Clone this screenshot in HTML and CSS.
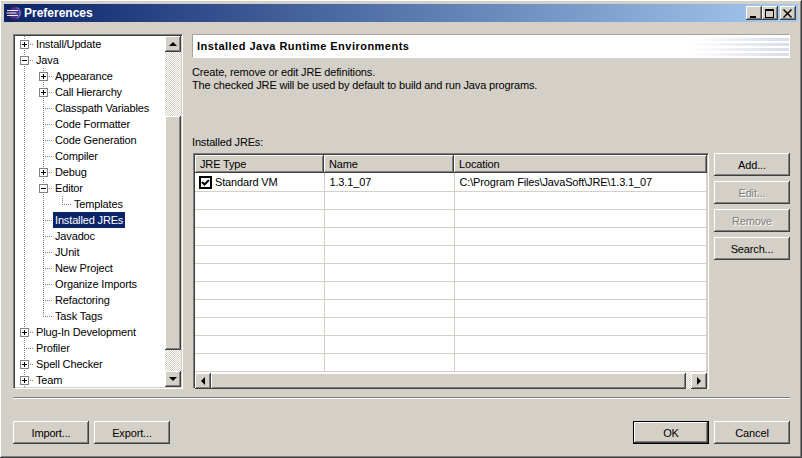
FILE: index.html
```html
<!DOCTYPE html>
<html lang="en">
<head>
    <meta charset="UTF-8">
    <title>Preferences</title>
    <link rel="stylesheet" href="styles.css">
</head>
<body>

<div class="window">
    <div class="titlebar">
        <svg class="app-icon" width="16" height="16" viewBox="0 0 16 16">
            <circle cx="8" cy="8" r="7.5" fill="#2a1e5c"/>
            <circle cx="9.5" cy="8" r="6" fill="#473788"/>
            <path d="M1 5.5h11M0.5 8h10M1 10.5h11" stroke="#e8e4f4" stroke-width="1.2"/>
            <path d="M11 2.5a6.5 6.5 0 0 1 0 11" stroke="#9a8fd0" fill="none"/>
        </svg>
        <span class="title">Preferences</span>
        <div class="caption-btns">
            <button class="caption-btn raised"><svg width="10" height="9"><path d="M1 7h6v2H1z" fill="#000"/></svg></button>
            <button class="caption-btn raised"><svg width="10" height="9"><path d="M0 0h9v9H0zM1 2v6h7V2z" fill="#000" fill-rule="evenodd"/></svg></button>
            <button class="caption-btn raised close"><svg width="10" height="9"><path d="M1 0l3.5 3.5L8 0l1 1-3.5 3.5L9 8 8 9 4.5 5.5 1 9 0 8l3.5-3.5L0 1z" fill="#000"/></svg></button>
        </div>
    </div>

    <div class="content">
        <div class="tree-box sunken">
            <div class="tree">
                <div class="row"><span class="cell tee"><i class="exp plus"></i></span><span class="label">Install/Update</span></div>
                <div class="row"><span class="cell tee"><i class="exp minus"></i></span><span class="label">Java</span></div>
                <div class="row"><span class="cell line"></span><span class="cell tee"><i class="exp plus"></i></span><span class="label">Appearance</span></div>
                <div class="row"><span class="cell line"></span><span class="cell tee"><i class="exp plus"></i></span><span class="label">Call Hierarchy</span></div>
                <div class="row"><span class="cell line"></span><span class="cell tee"></span><span class="label">Classpath Variables</span></div>
                <div class="row"><span class="cell line"></span><span class="cell tee"></span><span class="label">Code Formatter</span></div>
                <div class="row"><span class="cell line"></span><span class="cell tee"></span><span class="label">Code Generation</span></div>
                <div class="row"><span class="cell line"></span><span class="cell tee"></span><span class="label">Compiler</span></div>
                <div class="row"><span class="cell line"></span><span class="cell tee"><i class="exp plus"></i></span><span class="label">Debug</span></div>
                <div class="row"><span class="cell line"></span><span class="cell tee"><i class="exp minus"></i></span><span class="label">Editor</span></div>
                <div class="row"><span class="cell line"></span><span class="cell line"></span><span class="cell corner"></span><span class="label">Templates</span></div>
                <div class="row"><span class="cell line"></span><span class="cell tee"></span><span class="label selected">Installed JREs</span></div>
                <div class="row"><span class="cell line"></span><span class="cell tee"></span><span class="label">Javadoc</span></div>
                <div class="row"><span class="cell line"></span><span class="cell tee"></span><span class="label">JUnit</span></div>
                <div class="row"><span class="cell line"></span><span class="cell tee"></span><span class="label">New Project</span></div>
                <div class="row"><span class="cell line"></span><span class="cell tee"></span><span class="label">Organize Imports</span></div>
                <div class="row"><span class="cell line"></span><span class="cell tee"></span><span class="label">Refactoring</span></div>
                <div class="row"><span class="cell line"></span><span class="cell corner"></span><span class="label">Task Tags</span></div>
                <div class="row"><span class="cell tee"><i class="exp plus"></i></span><span class="label">Plug-In Development</span></div>
                <div class="row"><span class="cell tee"></span><span class="label">Profiler</span></div>
                <div class="row"><span class="cell tee"><i class="exp plus"></i></span><span class="label">Spell Checker</span></div>
                <div class="row"><span class="cell tee"><i class="exp plus"></i></span><span class="label">Team</span></div>
            </div>
            <div class="vscroll">
                <div class="scroll-btn raised"><i class="arrow up"></i></div>
                <div class="track track-top"></div>
                <div class="thumb-v raised"></div>
                <div class="track track-fill"></div>
                <div class="scroll-btn raised"><i class="arrow down"></i></div>
            </div>
        </div>

        <div class="main">
            <div class="page-header">
                <span>Installed Java Runtime Environments</span>
                <div class="banner"></div>
            </div>
            <p class="desc">Create, remove or edit JRE definitions.<br>The checked JRE will be used by default to build and run Java programs.</p>
            <div class="jre-label">Installed JREs:</div>
            <div class="jre-area">
                <div class="table-box sunken">
                    <table class="jre-table">
                        <thead>
                            <tr><th class="col-type">JRE Type</th><th class="col-name">Name</th><th>Location</th></tr>
                        </thead>
                        <tbody>
                            <tr>
                                <td><span class="type-cell">
                                    <svg width="13" height="13" viewBox="0 0 13 13"><rect x="1" y="1" width="11" height="11" fill="#fff" stroke="#000" stroke-width="2"/><path d="M3 6l2.5 2.5L10 4" fill="none" stroke="#000" stroke-width="2"/></svg>
                                    Standard VM</span></td>
                                <td>1.3.1_07</td>
                                <td>C:\Program Files\JavaSoft\JRE\1.3.1_07</td>
                            </tr>
                            <tr><td></td><td></td><td></td></tr>
                            <tr><td></td><td></td><td></td></tr>
                            <tr><td></td><td></td><td></td></tr>
                            <tr><td></td><td></td><td></td></tr>
                            <tr><td></td><td></td><td></td></tr>
                            <tr><td></td><td></td><td></td></tr>
                            <tr><td></td><td></td><td></td></tr>
                            <tr><td></td><td></td><td></td></tr>
                            <tr><td></td><td></td><td></td></tr>
                            <tr><td></td><td></td><td></td></tr>
                        </tbody>
                    </table>
                    <div class="hscroll">
                        <div class="scroll-btn raised"><i class="arrow left"></i></div>
                        <div class="thumb-h raised"></div>
                        <div class="track track-h"></div>
                        <div class="scroll-btn raised"><i class="arrow right"></i></div>
                    </div>
                </div>
                <div class="side-btns">
                    <button class="btn raised">Add...</button>
                    <button class="btn raised" disabled>Edit...</button>
                    <button class="btn raised" disabled>Remove</button>
                    <button class="btn raised">Search...</button>
                </div>
            </div>
        </div>
    </div>

    <div class="separator"></div>

    <div class="footer">
        <button class="btn raised">Import...</button>
        <button class="btn raised">Export...</button>
        <div class="spacer"></div>
        <button class="btn raised default">OK</button>
        <button class="btn raised">Cancel</button>
    </div>
</div>

</body>
</html>
```

FILE: styles.css
```css
body {
    margin: 0;
    background-color: #d4d0c8;
    font-family: "Liberation Sans", Arial, sans-serif;
    font-size: 11px;
    letter-spacing: -0.15px;
    color: #000;
}

.window {
    width: 802px;
    height: 458px;
    box-sizing: border-box;
    padding: 4px;
    background-color: #d4d0c8;
    box-shadow: inset -1px -1px #404040, inset 1px 1px #fff, inset -2px -2px #808080;
    display: flex;
    flex-direction: column;
}

.raised {
    background-color: #d4d0c8;
    box-shadow: inset -1px -1px #404040, inset 1px 1px #fff, inset -2px -2px #808080;
}

.sunken {
    box-sizing: border-box;
    border-top: 1px solid #808080;
    border-left: 1px solid #808080;
    border-right: 1px solid #fff;
    border-bottom: 1px solid #fff;
    box-shadow: inset 1px 1px #404040, inset -1px -1px #d4d0c8;
    padding: 1px;
}

/* title bar */
.titlebar {
    height: 18px;
    flex: none;
    display: flex;
    align-items: center;
    padding: 0 2px;
    background: linear-gradient(to right, #0a246a, #a6caf0);
    color: #fff;
}

.app-icon {
    flex: none;
    margin-right: 2px;
}

.title {
    font-weight: bold;
    font-size: 12px;
    letter-spacing: 0;
}

.caption-btns {
    margin-left: auto;
    display: flex;
}

.caption-btn {
    width: 16px;
    height: 14px;
    padding: 0;
    border: none;
    display: flex;
    align-items: center;
    justify-content: center;
}

.close {
    margin-left: 2px;
}

/* layout */
.content {
    margin-top: 12px;
    padding: 0 8px 0 9px;
    display: flex;
    gap: 9px;
}

/* tree */
.tree-box {
    width: 170px;
    height: 355px;
    background: #fff;
    display: flex;
}

.tree {
    flex: 1;
}

.row {
    height: 16px;
    display: flex;
    align-items: center;
    line-height: 16px;
    white-space: nowrap;
}

.cell {
    width: 19px;
    height: 16px;
    flex: none;
    display: flex;
    box-sizing: border-box;
    padding: 4px 0 0 5px;
    background-repeat: no-repeat;
}

.line {
    background-image: repeating-linear-gradient(#808080 0 1px, transparent 1px 2px);
    background-size: 1px 16px;
    background-position: 9px 0;
}

.tee {
    background-image:
        repeating-linear-gradient(#808080 0 1px, transparent 1px 2px),
        repeating-linear-gradient(to right, #808080 0 1px, transparent 1px 2px);
    background-size: 1px 16px, 9px 1px;
    background-position: 9px 0, 9px 8px;
}

.corner {
    background-image:
        repeating-linear-gradient(#808080 0 1px, transparent 1px 2px),
        repeating-linear-gradient(to right, #808080 0 1px, transparent 1px 2px);
    background-size: 1px 9px, 9px 1px;
    background-position: 9px 0, 9px 8px;
}

.exp {
    width: 9px;
    height: 9px;
    box-sizing: border-box;
    border: 1px solid #808080;
    background-color: #fff;
    background-repeat: no-repeat;
}

.plus {
    background-image: linear-gradient(#000, #000), linear-gradient(#000, #000);
    background-size: 5px 1px, 1px 5px;
    background-position: 1px 3px, 3px 1px;
}

.minus {
    background-image: linear-gradient(#000, #000);
    background-size: 5px 1px;
    background-position: 1px 3px;
}

.label {
    padding: 0 2px;
}

.selected {
    background-color: #0a246a;
    color: #fff;
}

/* scrollbars */
.vscroll {
    width: 16px;
    flex: none;
    display: flex;
    flex-direction: column;
}

.hscroll {
    height: 16px;
    margin-top: 1px;
    display: flex;
}

.scroll-btn {
    width: 16px;
    height: 16px;
    flex: none;
    display: flex;
    align-items: center;
    justify-content: center;
}

.track {
    background: repeating-conic-gradient(#fff 0 25%, #d4d0c8 0 50%) 0 0 / 2px 2px;
}

.track-top {
    height: 64px;
}

.thumb-v {
    height: 234px;
}

.track-fill {
    flex: 1;
}

.thumb-h {
    width: 475px;
}

.track-h {
    flex: 1;
}

.arrow {
    width: 0;
    height: 0;
    border: 4px solid transparent;
}

.up {
    border-top: none;
    border-bottom-color: #000;
}

.down {
    border-bottom: none;
    border-top-color: #000;
}

.left {
    border-left: none;
    border-right-color: #000;
}

.right {
    border-right: none;
    border-left-color: #000;
}

/* right side */
.main {
    flex: 1;
    min-width: 0;
}

.page-header {
    height: 24px;
    box-sizing: border-box;
    border-top: 1px solid #a8a49c;
    border-left: 1px solid #a8a49c;
    border-right: 1px solid #fff;
    border-bottom: 1px solid #fff;
    background: #fff;
    display: flex;
    align-items: center;
    padding-left: 4px;
    font-weight: bold;
    letter-spacing: 0.48px;
}

.banner {
    margin-left: auto;
    width: 100px;
    height: 20px;
    background:
        linear-gradient(to right, #fff, rgba(255, 255, 255, 0)),
        repeating-linear-gradient(#fff 0 2px, #d8dce8 2px 5px);
}

.desc {
    margin: 8px 0 0;
    line-height: 13px;
}

.jre-label {
    margin-top: 44px;
    line-height: 13px;
}

.jre-area {
    margin-top: 4px;
    display: flex;
    gap: 5px;
}

.table-box {
    width: 516px;
    height: 236px;
    margin-left: 1px;
    background: #fff;
}

.jre-table {
    width: 512px;
    border-collapse: collapse;
    table-layout: fixed;
}

.jre-table th {
    height: 18px;
    padding: 0 0 0 5px;
    box-sizing: border-box;
    font-weight: normal;
    text-align: left;
    background-color: #d4d0c8;
    box-shadow: inset -1px -1px #404040, inset 1px 1px #fff, inset -2px -2px #808080;
}

.col-type {
    width: 129px;
}

.col-name {
    width: 130px;
}

.jre-table td {
    height: 18px;
    padding: 1px 0 0 5px;
    box-sizing: border-box;
    border-right: 1px solid #d4d0c8;
    border-bottom: 1px solid #d4d0c8;
}

.type-cell {
    display: flex;
    align-items: center;
    gap: 3px;
    margin-left: -1px;
}

.side-btns {
    display: flex;
    flex-direction: column;
    gap: 5px;
}

/* buttons */
.btn {
    width: 76px;
    height: 23px;
    padding: 0;
    border: none;
    font-family: inherit;
    font-size: 11px;
    letter-spacing: inherit;
    color: #000;
}

.btn:disabled {
    color: #808080;
    text-shadow: 1px 1px #fff;
}

.default {
    outline: 1px solid #000;
    outline-offset: -1px;
    box-shadow: inset -2px -2px #404040, inset 2px 2px #fff, inset -3px -3px #808080;
}

.separator {
    height: 1px;
    margin: 8px 8px 0 9px;
    background: #808080;
    border-bottom: 1px solid #fff;
}

.footer {
    margin-top: 22px;
    padding: 0 8px 0 9px;
    display: flex;
    gap: 5px;
}

.spacer {
    flex: 1;
}
```
